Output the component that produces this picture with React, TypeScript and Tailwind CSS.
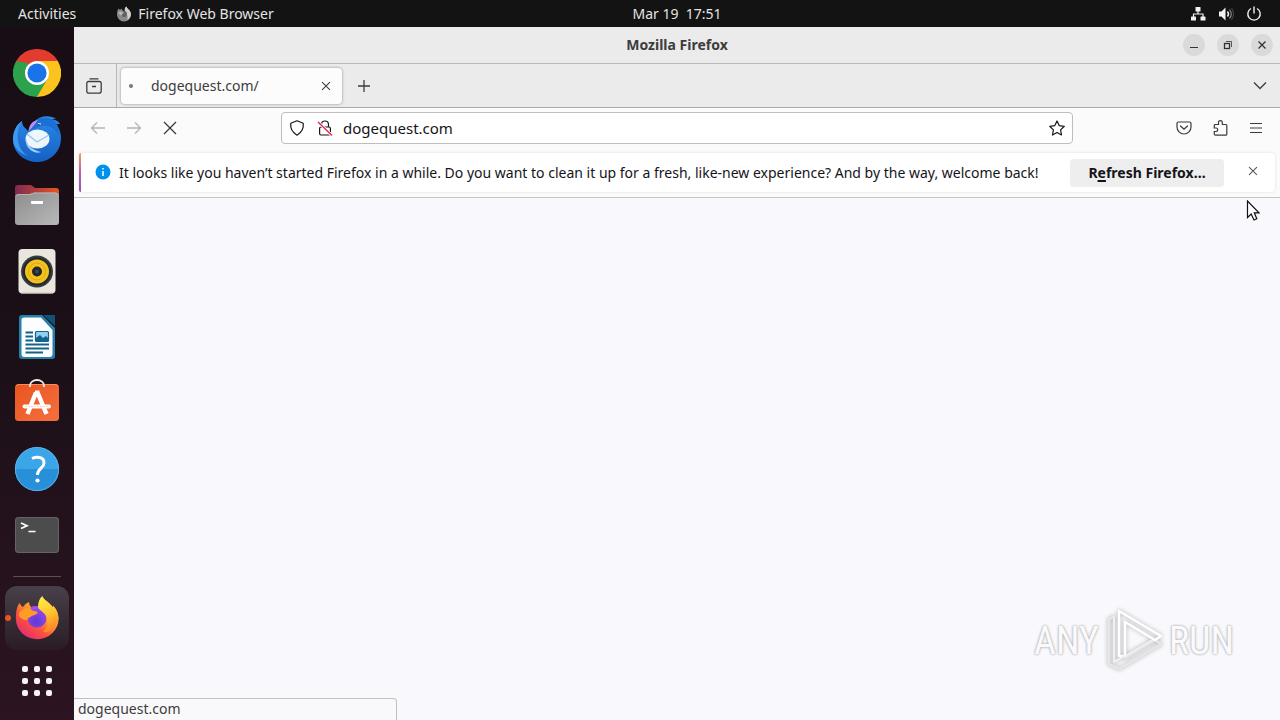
import React, { useState } from 'react';

interface DockItem {
    name: string;
    icon: React.ReactNode;
}

interface IconButtonProps {
    label: string;
    className?: string;
    disabled?: boolean;
    children: React.ReactNode;
}

const ChromeIcon = () => (
    <svg viewBox="0 0 48 48" className="h-12 w-12">
        <path d="M24 24 3.2 12A24 24 0 0 1 44.8 12Z" fill="#e33b2e" />
        <path d="M24 24 44.8 12A24 24 0 0 1 24 48Z" fill="#fcc31e" />
        <path d="M24 24 24 48A24 24 0 0 1 3.2 12Z" fill="#2ba24c" />
        <path d="M3.2 12 13.6 30 24 12Z" fill="#e33b2e" />
        <path d="M3.2 12 13.6 30 20 24 14 14Z" fill="#2ba24c" />
        <path d="M24 12H44.8L34.4 30Z" fill="#fcc31e" />
        <path d="M34.4 30 24 48 13.6 30Z" fill="#2ba24c" />
        <path d="M24 12H5A24 24 0 0 1 44.8 12Z" fill="#e33b2e" />
        <circle cx="24" cy="24" r="12" fill="#fff" />
        <circle cx="24" cy="24" r="9.6" fill="#1a73e8" />
    </svg>
);

const ThunderbirdIcon = () => (
    <svg viewBox="0 0 48 48" className="h-12 w-12">
        <defs>
            <linearGradient id="tb-body" x1="0" y1="0" x2="0" y2="1">
                <stop offset="0" stopColor="#2a8ae6" />
                <stop offset="1" stopColor="#1560c4" />
            </linearGradient>
        </defs>
        <path d="M9 6C9 12 13 13 15 16L22 6C27 0 38 0 43 4L38 4C44 5 46 7 47 9L43 9C47 14 48 19 48 23 48 37 37 47 24 47 11 47 0 37 0 25 0 17 3 10 9 6Z" fill="url(#tb-body)" />
        <path d="M9 6C2 16 3 34 15 41 8 39 0 33 0 24 0 17 3 10 9 6Z" fill="#3e9af0" />
        <path d="M15 16C19 5 28 0 38 4 44 7 47 13 45 20 41 11 33 9 25 12 20 14 16 17 15 16Z" fill="#1c6fd4" />
        <path d="M16 16C16 9 20 6 25 5L22 9C20 11 18 14 16 16Z" fill="#c48ff2" />
        <ellipse cx="24.500" cy="24" rx="12" ry="9.500" fill="#eef6fd" />
        <path d="M13 23C14 31 20 35 28 37 23 40 11 34 13 23Z" fill="#9dcbf5" />
        <path d="M14 19 24 27 36 20" fill="none" stroke="#9fc4e6" strokeWidth="1.400" />
        <circle cx="26" cy="9" r="1.300" fill="#0b3f8c" />
        <path d="M25 8.500 28 9" stroke="#fff" strokeWidth="1" />
    </svg>
);

const FilesIcon = () => (
    <svg viewBox="0 0 48 48" className="h-12 w-12">
        <defs>
            <linearGradient id="files-back">
                <stop offset="0" stopColor="#7e2a53" />
                <stop offset="1" stopColor="#e95420" />
            </linearGradient>
            <linearGradient id="files-front" x1="0" y1="0" x2="1" y2="1">
                <stop offset="0" stopColor="#8d8d8d" />
                <stop offset="1" stopColor="#b9b9b9" />
            </linearGradient>
        </defs>
        <path d="M2 7A3 3 0 0 1 5 4H18L22 7H43A3 3 0 0 1 46 10V25H2Z" fill="url(#files-back)" />
        <path d="M2 16A3 3 0 0 1 5 13H17L21 11.500H43A3 3 0 0 1 46 14V41A3 3 0 0 1 43 44H5A3 3 0 0 1 2 41Z" fill="url(#files-front)" />
        <path d="M3 15 5 13.500H17L21 12H43L45 14" fill="none" stroke="#bcbcbc" strokeWidth=".8" />
        <rect x="18" y="20" width="12" height="3" rx=".8" fill="#fff" />
    </svg>
);

const RhythmboxIcon = () => (
    <svg viewBox="0 0 48 48" className="h-12 w-12">
        <rect x="5.500" y="2" width="37" height="44.500" rx="4" fill="#e9e6de" />
        <path d="M8 46H40" stroke="#c8c4b8" />
        <circle cx="24" cy="24.500" r="16" fill="#353b40" />
        <circle cx="24" cy="24.500" r="14" fill="#23282b" />
        <circle cx="24" cy="24.500" r="12" fill="#f4c21f" />
        <circle cx="24" cy="24.500" r="8.500" fill="none" stroke="#dca914" />
        <circle cx="24" cy="24.500" r="5" fill="#20262b" />
        <circle cx="24" cy="24.500" r="2" fill="#3c474f" />
    </svg>
);

const WriterIcon = () => (
    <svg viewBox="0 0 48 48" className="h-12 w-12">
        <path d="M9 2H29L42 15V43A3 3 0 0 1 39 46H9A3 3 0 0 1 6 43V5A3 3 0 0 1 9 2Z" fill="#2580ad" />
        <path d="M30 2H42V13Z" fill="#125278" />
        <path d="M11 4.500H28L39.500 17V41A3 3 0 0 1 36.500 44H11A2.500 2.500 0 0 1 8.500 41V7A2.500 2.500 0 0 1 11 4.500Z" fill="#fbfdfe" />
        <path d="M12.500 19.500H20M12.500 23.500H20M12.500 27.500H20M12.500 31.500H36M12.500 35.500H36M12.500 39.500H30" stroke="#14618c" strokeWidth="1.900" />
        <rect x="22.500" y="18.500" width="13" height="10" rx="1" fill="#8fd0f5" stroke="#14618c" strokeWidth="1.200" />
        <path d="M23 28V25L27 22 30 25 33 23 35 25V28Z" fill="#14618c" />
    </svg>
);

const SoftwareIcon = () => (
    <svg viewBox="0 3 48 48" className="h-12 w-12">
        <defs>
            <linearGradient id="software-bag" x1="0" y1="0" x2="1" y2="1">
                <stop offset="0" stopColor="#e95420" />
                <stop offset="1" stopColor="#f4703f" />
            </linearGradient>
        </defs>
        <rect x="2" y="8" width="44" height="37" rx="3.500" fill="url(#software-bag)" />
        <path d="M3 10Q4 8.500 6 8.500H42Q44 8.500 45 10" fill="none" stroke="#f59a74" strokeWidth=".8" />
        <path d="M17 11V9.500A7 5.500 0 0 1 31 9.500V11" fill="none" stroke="#f6efe8" strokeWidth="1.800" />
        <path d="M23 16.500 14.500 38M24.500 16.500 33.500 38" fill="none" stroke="#fff" strokeWidth="4.500" />
        <path d="M22 16.500H26.500" stroke="#fff" strokeWidth="4" />
        <rect x="9.500" y="28.500" width="28.500" height="4" rx="2" fill="#fff" />
        <path d="M12 30.500H36" stroke="#f7b79d" strokeWidth=".6" strokeDasharray="2 1" />
    </svg>
);

const HelpIcon = () => (
    <svg viewBox="0 0 48 48" className="h-12 w-12">
        <circle cx="24" cy="24" r="22" fill="#3aa6e8" />
        <path d="M2 24A22 22 0 0 0 46 24Z" fill="#2790d8" />
        <circle cx="24" cy="24" r="21.600" fill="none" stroke="#69bdf0" strokeWidth=".7" />
        <path d="M19 13.500C23.500 11.500 31 11.500 31 18 31 23.500 24.500 23 24.500 30" fill="none" stroke="#fff" strokeWidth="3" />
        <circle cx="24.500" cy="35.500" r="2.100" fill="#fff" />
    </svg>
);

const TerminalIcon = () => (
    <svg viewBox="0 0 48 48" className="h-12 w-12">
        <rect x="2" y="6" width="44" height="36" rx="3.500" fill="#4c4c4c" />
        <rect x="2.500" y="6.500" width="43" height="35" rx="3" fill="none" stroke="#6b6b6b" strokeWidth=".8" />
        <path d="M8 12 14 14.700 8 17.500M15.500 20.500H22.500" fill="none" stroke="#fff" strokeWidth="1.700" />
    </svg>
);

const FirefoxIcon = () => (
    <svg viewBox="0 0 48 48" className="h-12 w-12">
        <defs>
            <linearGradient id="fx-flame" x1=".9" y1=".1" x2=".2" y2=".9">
                <stop offset="0" stopColor="#ffe13c" />
                <stop offset=".35" stopColor="#ffa02a" />
                <stop offset=".68" stopColor="#fb5040" />
                <stop offset="1" stopColor="#e6306c" />
            </linearGradient>
            <linearGradient id="fx-tail" x1="0" y1="0" x2=".3" y2="1">
                <stop offset="0" stopColor="#fff150" />
                <stop offset=".6" stopColor="#ffc32d" />
                <stop offset="1" stopColor="#ff8a2c" />
            </linearGradient>
            <radialGradient id="fx-globe" cx=".45" cy=".7" r=".7">
                <stop offset="0" stopColor="#5f38d8" />
                <stop offset="1" stopColor="#9a48e8" />
            </radialGradient>
        </defs>
        <path d="M6.500 9Q8 12 10 13Q12 9.500 16 8Q16 11 18 13L38 12Q45.500 17 45.500 24.500A21.300 20.500 0 0 1 2.900 25C2.900 18 3.500 13 6.500 9Z" fill="url(#fx-flame)" />
        <path d="M18 13Q21 11.500 26 12.500L33 18 24 23 16 18Z" fill="#a94be0" />
        <circle cx="24" cy="24" r="9.500" fill="url(#fx-globe)" />
        <path d="M29.300 2C31 6 36 8 39.500 12.500Q40.500 14 40 11.500C44 15 45.500 20 45.500 25C43.500 34 37 39 30 38C34.500 34 35.500 29 33.500 23C32 18 25 16 25 12.500C25 8 27 4 29.300 2Z" fill="url(#fx-tail)" />
        <path d="M5.500 20C8 16 12 13.500 17 13.500C17.500 16 19.500 17 23.500 17.500C25 18 25 19 23.500 20C21 21.500 18.500 21.500 17.500 23C15.500 23.500 14.500 24 14.500 26C10 26 6 24 5.500 20Z" fill="#ff9c24" />
    </svg>
);

const MonoFirefoxIcon = () => (
    <svg viewBox="0 0 16 16" className="h-4 w-4">
        <path d="M2.500 2.500 4 4 5.500 2.500 6.500 4.500 9 5Q8 2 10.500.500C11 3 15 4 15 8.500A7 7 0 0 1 1 8.500C1 6 1.500 4 2.500 2.500Z" fill="#8a8a8a" />
        <path d="M10.500.500C11 3 15 4 15 8.500A7 7 0 0 1 11 14C13 10 10 7 9 5Q8 2 10.500.500Z" fill="#d0d0d0" />
        <circle cx="8" cy="8" r="3" fill="#626262" />
        <path d="M2 6Q5 5 8 6.500 5.500 8 6 9.500 4 10 2 6Z" fill="#b5b5b5" />
    </svg>
);

const CloseGlyph = ({ className = 'h-4 w-4' }: { className?: string }) => (
    <svg viewBox="0 0 16 16" className={className} fill="none" stroke="currentColor">
        <path d="M3.500 3.500 12.500 12.500M12.500 3.500 3.500 12.500" strokeWidth="1.200" />
    </svg>
);

const IconButton: React.FC<IconButtonProps> = ({ label, className = '', disabled, children }) => (
    <button aria-label={label} disabled={disabled} className={`flex shrink-0 items-center justify-center ${className}`}>
        {children}
    </button>
);

const dockItems: DockItem[] = [
    { name: 'Google Chrome', icon: <ChromeIcon /> },
    { name: 'Thunderbird Mail', icon: <ThunderbirdIcon /> },
    { name: 'Files', icon: <FilesIcon /> },
    { name: 'Rhythmbox', icon: <RhythmboxIcon /> },
    { name: 'LibreOffice Writer', icon: <WriterIcon /> },
    { name: 'Ubuntu Software', icon: <SoftwareIcon /> },
    { name: 'Help', icon: <HelpIcon /> },
    { name: 'Terminal', icon: <TerminalIcon /> },
];

const TopBar = () => (
    <header className="grid h-[27px] shrink-0 grid-cols-[1fr_auto_1fr] items-center bg-[#131313] pl-[74px] text-sm text-[#e4e4e4]">
        <div className="-ml-14 flex items-center">
            <button>Activities</button>
            <button className="ml-10 flex items-center gap-1.5">
                <MonoFirefoxIcon />
                Firefox Web Browser
            </button>
        </div>
        <button className="whitespace-pre">Mar 19  17:51</button>
        <button aria-label="System menu" className="mr-[18px] flex items-center gap-3 justify-self-end">
            <svg viewBox="0 0 16 16" className="h-4 w-4" fill="#f2f2f2">
                <rect x="5.500" y="1" width="5" height="4.500" rx=".6" />
                <rect x="1" y="10.500" width="5" height="4" rx=".6" />
                <rect x="10.500" y="10.500" width="5" height="4" rx=".6" />
                <path d="M8 5V8M3.500 11V8H13V11" fill="none" stroke="#f2f2f2" strokeWidth="1.200" />
            </svg>
            <svg viewBox="0 0 16 16" className="h-4 w-4" fill="none">
                <path d="M1 5.500H3.500L7.500 1.500V14.500L3.500 10.500H1Z" fill="#f2f2f2" />
                <path d="M9.500 5.500Q11.500 8 9.500 10.500" stroke="#f2f2f2" strokeWidth="1.400" />
                <path d="M11.500 3.500Q15 8 11.500 12.500" stroke="#8a8a8a" strokeWidth="1.200" />
                <path d="M13.500 2Q17.500 8 13.500 14" stroke="#4a4a4a" />
            </svg>
            <svg viewBox="0 0 16 16" className="h-4 w-4" fill="none" stroke="#f2f2f2" strokeWidth="1.400">
                <path d="M5 2.500A6.200 6.200 0 1 0 11 2.500M8 .500V7.500" />
            </svg>
        </button>
    </header>
);

const Dock = () => (
    <nav aria-label="Dock" className="flex w-[74px] shrink-0 flex-col items-center bg-linear-to-b from-[#180d15] via-[#1c1018] to-[#2c1421] pt-[13px]">
        {dockItems.map((item) => (
            <button key={item.name} aria-label={item.name} className="flex h-[66px] w-16 items-center justify-center">
                {item.icon}
            </button>
        ))}
        <hr className="mt-2 w-12 border-[#5b4f57]" />
        <div className="mt-[9px] flex w-full items-center">
            <span className="w-[5px] shrink-0" />
            <button aria-label="Firefox" className="relative flex h-16 w-16 items-center justify-center rounded-xl bg-linear-to-b from-[#48404a] to-[#2a1c26]">
                <span className="absolute top-1/2 left-0 h-1.5 w-1.5 -translate-y-1/2 rounded-full bg-[#e95420]" />
                <FirefoxIcon />
            </button>
        </div>
        <button aria-label="Show Applications" className="mt-4 grid grid-cols-3 gap-1.5">
            {Array.from({ length: 9 }, (_, i) => (
                <span key={i} className="h-1.5 w-1.5 rounded-xs bg-[#f7f2f5]" />
            ))}
        </button>
    </nav>
);

const TitleBar = () => (
    <div className="grid h-[37px] shrink-0 grid-cols-[1fr_auto_1fr] items-center border-b border-[#b9b9b9] bg-[#ebebeb]">
        <h1 className="col-start-2 text-sm font-bold text-[#3d3d3d]">Mozilla Firefox</h1>
        <div className="mr-[7px] flex gap-3 justify-self-end text-[#333]">
            <IconButton label="Minimize" className="h-[22px] w-[22px] rounded-full bg-[#dadada]">
                <svg viewBox="0 0 16 16" className="h-4 w-4" stroke="currentColor"><path d="M4 10.500H12" /></svg>
            </IconButton>
            <IconButton label="Restore" className="h-[22px] w-[22px] rounded-full bg-[#dadada]">
                <svg viewBox="0 0 16 16" className="h-4 w-4" fill="none" stroke="currentColor">
                    <rect x="4.500" y="6.500" width="5" height="5" strokeWidth="1.300" />
                    <path d="M6 4.500H11.500V10" strokeWidth=".8" />
                </svg>
            </IconButton>
            <IconButton label="Close window" className="h-[22px] w-[22px] rounded-full bg-[#dadada]">
                <svg viewBox="0 0 16 16" className="h-4 w-4" stroke="currentColor" strokeWidth="1.300"><path d="M4.500 4.500 11.500 11.500M11.500 4.500 4.500 11.500" /></svg>
            </IconButton>
        </div>
    </div>
);

const TabStrip = () => (
    <div className="flex h-11 shrink-0 items-center border-b border-[#a9a9a9] bg-[#ebebeb] text-[#3d3d3d]">
        <IconButton label="Firefox View" className="h-full w-[43px] border-r border-[#b5b5b5] pr-0.5">
            <svg viewBox="0 0 16 16" className="h-4 w-4" fill="none" stroke="currentColor" strokeWidth="1.300">
                <path d="M3.500 .800H12.500M.800 6V5A1.700 1.700 0 0 1 2.500 3.500H13.500A1.700 1.700 0 0 1 15.200 5V13A2 2 0 0 1 13.200 15.200H2.800A2 2 0 0 1 .800 13ZM6 8.500H10" />
            </svg>
        </IconButton>
        <div className="ml-1 flex h-9 w-[221px] items-center rounded-sm bg-[#fcfcfc] px-2 shadow-[0_0_3px_rgba(0,0,0,0.4)]">
            <span className="h-1 w-1 rounded-full bg-[#777]" />
            <span className="ml-[18px] flex-1 text-sm">dogequest.com/</span>
            <IconButton label="Close tab" className="h-5 w-4"><CloseGlyph className="h-3.5 w-3.5" /></IconButton>
        </div>
        <IconButton label="New tab" className="ml-2 h-8 w-7">
            <svg viewBox="0 0 16 16" className="h-4 w-4" stroke="currentColor" strokeWidth="1.300"><path d="M2 8H14M8 2V14" /></svg>
        </IconButton>
        <IconButton label="List all tabs" className="mr-1 ml-auto h-8 w-8">
            <svg viewBox="0 0 16 16" className="h-4 w-4" fill="none" stroke="currentColor" strokeWidth="1.300"><path d="M2 4.500 8 10.500 14 4.500" /></svg>
        </IconButton>
    </div>
);

const NavBar = () => {
    const [url, setUrl] = useState('dogequest.com');

    return (
        <div className="flex h-10 shrink-0 items-center px-1.5 text-[#3a3a3a]">
            <IconButton label="Back" disabled className="h-8 w-9 text-[#b4b4b4]">
                <svg viewBox="0 0 16 16" className="h-4 w-4" fill="none" stroke="currentColor" strokeWidth="1.300"><path d="M15 8H1.500M7 2.500 1.500 8 7 13.500" /></svg>
            </IconButton>
            <IconButton label="Forward" disabled className="h-8 w-9 text-[#b4b4b4]">
                <svg viewBox="0 0 16 16" className="h-4 w-4" fill="none" stroke="currentColor" strokeWidth="1.300"><path d="M1 8H14.500M9 2.500 14.500 8 9 13.500" /></svg>
            </IconButton>
            <IconButton label="Stop" className="h-8 w-9">
                <svg viewBox="0 0 16 16" className="h-4 w-4" stroke="currentColor" strokeWidth="1.300"><path d="M2 2 14 14M14 2 2 14" /></svg>
            </IconButton>
            <div className="mx-[93px] flex h-8 min-w-0 flex-1 items-center rounded-sm border border-[#bdbdbd] bg-white px-[7px] text-[#15141a]">
                <IconButton label="Tracking protection">
                    <svg viewBox="0 0 16 16" className="h-4 w-4" fill="none" stroke="currentColor" strokeWidth="1.200">
                        <path d="M8 .800 14.200 3.200Q15.200 11 8 15.200.800 11 1.800 3.200Z" strokeLinejoin="round" />
                    </svg>
                </IconButton>
                <IconButton label="Connection not secure" className="ml-3">
                    <svg viewBox="0 0 16 16" className="h-4 w-4" fill="none" stroke="currentColor" strokeWidth="1.200">
                        <path d="M4.500 7V4.500A3.500 3.500 0 0 1 11.500 4.500V7M2.600 8.500A1.500 1.500 0 0 1 4 7H12A1.500 1.500 0 0 1 13.400 8.500V13.500A1.500 1.500 0 0 1 12 15H4A1.500 1.500 0 0 1 2.600 13.500Z" />
                        <path d="M1 2 15 15.500" stroke="#fff" strokeWidth="3" />
                        <path d="M1 2 15 15.500" stroke="#e22850" strokeWidth="1.400" />
                    </svg>
                </IconButton>
                <input
                    aria-label="Search or enter address"
                    value={url}
                    onChange={(e) => setUrl(e.target.value)}
                    className="ml-2.5 min-w-0 flex-1 bg-transparent text-[15px] outline-none"
                />
                <IconButton label="Bookmark this page">
                    <svg viewBox="0 0 16 16" className="h-4 w-4" fill="none" stroke="currentColor" strokeWidth="1.200" strokeLinejoin="round">
                        <path d="M8 1 10.200 5.600 15.300 6.300 11.600 9.900 12.500 15 8 12.500 3.500 15 4.400 9.900.700 6.300 5.800 5.600Z" />
                    </svg>
                </IconButton>
            </div>
            <IconButton label="Save to Pocket" className="h-8 w-9">
                <svg viewBox="0 0 16 16" className="h-4 w-4" fill="none" stroke="currentColor" strokeWidth="1.200">
                    <path d="M2.500 2H13.500A1.500 1.500 0 0 1 15 3.500V7A7 7 0 0 1 1 7V3.500A1.500 1.500 0 0 1 2.500 2ZM4.500 6 8 9.300 11.500 6" strokeLinecap="round" />
                </svg>
            </IconButton>
            <IconButton label="Extensions" className="h-8 w-9">
                <svg viewBox="0 0 16 16" className="h-4 w-4" fill="none" stroke="currentColor" strokeWidth="1.200">
                    <path d="M2.300 8V5.500A1 1 0 0 1 3.300 4.500H6.500V2.500A1.900 1.900 0 0 1 10.300 2.500V4.500H13.800A1 1 0 0 1 14.800 5.500V14.200A1 1 0 0 1 13.800 15.200H3.300A1 1 0 0 1 2.300 14.200V11.500H4A1.750 1.750 0 0 0 4 8Z" />
                </svg>
            </IconButton>
            <IconButton label="Open application menu" className="h-8 w-9">
                <svg viewBox="0 0 16 16" className="h-4 w-4" stroke="currentColor" strokeWidth="1.200"><path d="M2 3.500H14M2 8H14M2 12.500H14" /></svg>
            </IconButton>
        </div>
    );
};

const NotificationBar = () => (
    <div className="m-[5px] flex h-[39px] shrink-0 items-center rounded-sm bg-white pr-3.5 text-[#15141a] shadow-[0_0_3px_rgba(0,0,0,0.12)]">
        <span className="h-full w-0.5 rounded-l-sm bg-linear-to-b from-[#f0975c] via-[#c45ab0] to-[#8d50c0]" />
        <svg viewBox="0 0 16 16" className="mb-0.5 ml-3.5 h-4 w-4 shrink-0">
            <circle cx="8" cy="8" r="7.500" fill="#0090ed" />
            <path d="M8 7V12M8 4V5.500" stroke="#fff" strokeWidth="1.500" />
        </svg>
        <p className="ml-2 flex-1 text-sm whitespace-nowrap">
            It looks like you haven’t started Firefox in a while. Do you want to clean it up for a fresh, like-new experience? And by the way, welcome back!
        </p>
        <button className="h-7 w-[154px] shrink-0 rounded-sm bg-[#eeeeef] text-sm font-bold">
            R<span className="underline decoration-2 underline-offset-2">e</span>fresh Firefox…
        </button>
        <IconButton label="Dismiss" className="mb-1 ml-[21px] h-4 w-4 text-[#555]"><CloseGlyph className="h-3.5 w-3.5" /></IconButton>
    </div>
);

const Watermark = () => (
    <div className="absolute right-[46px] bottom-[46px] flex items-center gap-1.5 font-['Roboto_Condensed','Roboto',sans-serif] text-[38px] text-[#fafafc] [text-shadow:0_0_2px_#aaa,0_0_3px_#bbb]">
        <span>ANY</span>
        <svg viewBox="0 0 58 66" className="h-[66px] w-[58px] drop-shadow-[0_0_2px_#aaa]" fill="none" strokeLinejoin="round">
            <path d="M10 8 4 11V56L14 61M14 61 56 36 50 32 20 50" stroke="#e6e6e8" strokeWidth="2.500" />
            <path d="M14 48V3L56 28 50 32 20 14V48Z" stroke="#fff" strokeWidth="2.500" />
            <path d="M9 9V54L20 48 47 32" stroke="#f0f0f2" strokeWidth="2" />
        </svg>
        <span>RUN</span>
    </div>
);

const App: React.FC = () => {
    return (
        <div className="relative flex min-h-screen flex-col overflow-hidden font-['Noto_Sans',sans-serif]">
            <TopBar />
            <div className="flex flex-1">
                <Dock />
                <main className="flex min-w-0 flex-1 flex-col bg-[#fbfbfb]">
                    <TitleBar />
                    <TabStrip />
                    <NavBar />
                    <NotificationBar />
                    <section className="relative flex-1 border-t border-[#c4c4c4] bg-[#f9f9fd]">
                        <svg viewBox="0 0 14 22" className="absolute top-0.5 right-5 h-[22px] w-3.5">
                            <path d="M1.500 1V17.500L5.200 14 8 20 10.800 18.700 8.300 12.800H13Z" fill="#fff" stroke="#111" strokeWidth="1.200" />
                        </svg>
                        <Watermark />
                        <div role="status" className="absolute bottom-0 left-0 h-[22px] w-[323px] rounded-tr-sm border-t border-r border-[#c0c0c0] bg-[#f9f9fb] pl-1 text-sm text-[#3d3d3d]">
                            dogequest.com
                        </div>
                    </section>
                </main>
            </div>
        </div>
    );
};

export default App;
